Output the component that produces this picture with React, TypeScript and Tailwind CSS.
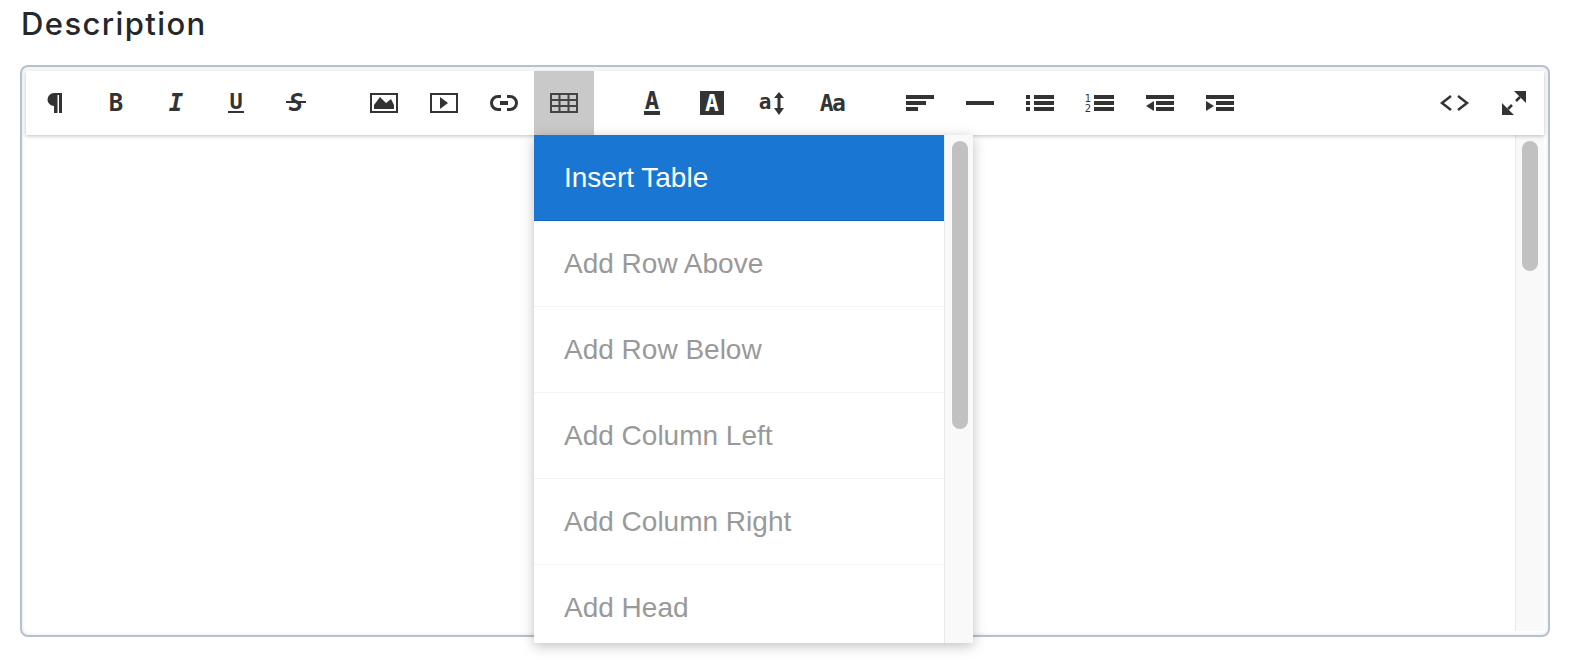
import type { ReactNode } from "react";

const MENU_ITEMS = ["Add Row Above", "Add Row Below", "Add Column Left", "Add Column Right", "Add Head"];

function Icon({ children }: { children: ReactNode }) {
  return (
    <svg width="60" height="64" viewBox="0 0 60 64" fill="#333" className="block">
      {children}
    </svg>
  );
}

// glyph style icons, kept as real text
function Glyph({ x, y, size, children, fill = "#333", italic = false }: { x: number; y: number; size: number; children: string; fill?: string; italic?: boolean }) {
  return (
    <text
      x={x}
      y={y}
      fontSize={size}
      fontWeight={700}
      fill={fill}
      textAnchor="middle"
      fontStyle={italic ? "italic" : "normal"}
      fontFamily='"DejaVu Sans Mono", monospace'
    >
      {children}
    </text>
  );
}

const GROUP_ONE: ReactNode[] = [
  <Icon key="p"><path d="M36 22h-8a6.500 6.500 0 0 0 0 13v7h3.500v-18h1.500v18h3z" /></Icon>,
  <Icon key="b"><Glyph x={30} y={40} size={24}>B</Glyph></Icon>,
  <Icon key="i"><Glyph x={30} y={40} size={24} italic>I</Glyph></Icon>,
  <Icon key="u"><Glyph x={30} y={38} size={22}>U</Glyph><rect x={22} y={40} width={16} height={2} /></Icon>,
  <Icon key="s"><Glyph x={30} y={40} size={24} italic>S</Glyph><rect x={20} y={30} width={20} height={2} /></Icon>,
];

const GROUP_TWO: ReactNode[] = [
  <Icon key="image">
    <rect x={17} y={23} width={26} height={18} fill="none" stroke="#333" strokeWidth={2} />
    <path d="M20 38v-4l6-8 6 6 5-4 3 6v4z" />
  </Icon>,
  <Icon key="video">
    <rect x={17} y={23} width={26} height={18} fill="none" stroke="#333" strokeWidth={2} />
    <path d="M26 26l8 6-8 6z" />
  </Icon>,
  <Icon key="link">
    <path d="M27 25.500h-3a6.500 6.500 0 0 0 0 13h3M33 25.500h3a6.500 6.500 0 0 1 0 13h-3" fill="none" stroke="#333" strokeWidth={3} />
    <rect x={26} y={30} width={8} height={4} />
  </Icon>,
];

const GROUP_THREE: ReactNode[] = [
  <Icon key="color"><Glyph x={30} y={38} size={24}>A</Glyph><rect x={22} y={40} width={16} height={4} /></Icon>,
  <Icon key="bg"><rect x={18} y={20} width={24} height={24} /><Glyph x={30} y={40} size={23} fill="#fff">A</Glyph></Icon>,
  <Icon key="size">
    <Glyph x={23} y={38} size={21}>a</Glyph>
    <path d="M37 21l5 6h-3.500v10h3.500l-5 7-5-7h3.500v-10h-3.500z" />
  </Icon>,
  <Icon key="case"><text x={30} y={40} fontSize={23} fontWeight={700} fill="#333" textAnchor="middle" letterSpacing={-1.500} fontFamily='"DejaVu Sans Mono", monospace'>Aa</text></Icon>,
];

const GROUP_FOUR: ReactNode[] = [
  <Icon key="align">
    <rect x={16} y={24} width={28} height={4} />
    <rect x={16} y={30} width={20} height={4} />
    <rect x={16} y={36} width={12} height={4} />
  </Icon>,
  <Icon key="hr"><rect x={16} y={30} width={28} height={4} /></Icon>,
  <Icon key="ul">
    <rect x={16} y={24} width={4} height={4} />
    <rect x={16} y={30} width={4} height={4} />
    <rect x={16} y={36} width={4} height={4} />
    <rect x={24} y={24} width={20} height={4} />
    <rect x={24} y={30} width={20} height={4} />
    <rect x={24} y={36} width={20} height={4} />
  </Icon>,
  <Icon key="ol">
    <text x={18} y={31} fontSize={10} textAnchor="middle" fontFamily='"DejaVu Sans", sans-serif'>1</text>
    <text x={18} y={41} fontSize={10} textAnchor="middle" fontFamily='"DejaVu Sans", sans-serif'>2</text>
    <rect x={24} y={24} width={20} height={4} />
    <rect x={24} y={30} width={20} height={4} />
    <rect x={24} y={36} width={20} height={4} />
  </Icon>,
  <Icon key="outdent">
    <rect x={16} y={24} width={28} height={4} />
    <rect x={26} y={30} width={18} height={4} />
    <rect x={26} y={36} width={18} height={4} />
    <path d="M16 35l8-5v10z" />
  </Icon>,
  <Icon key="indent">
    <rect x={16} y={24} width={28} height={4} />
    <rect x={26} y={30} width={18} height={4} />
    <rect x={26} y={36} width={18} height={4} />
    <path d="M24 35l-8-5v10z" />
  </Icon>,
];

export default function App() {
  return (
    <div className="w-[1570px] h-[660px] bg-white pl-5 pr-5 overflow-hidden" style={{ fontFamily: '"Liberation Sans", Arial, sans-serif' }}>
      <h2 className="h-[65px] pt-[4px] pl-px text-[31px] leading-[40px] tracking-[1.400px] font-medium text-[#24272b] font-['Inter',sans-serif]">
        Description
      </h2>

      <div className="h-[572px] border-2 border-[#b6c1cf] rounded-lg p-1 flex flex-col bg-white shadow-[inset_0_0_4px_#e0e5ec]">
        {/* toolbar */}
        <div className="h-16 shrink-0 flex bg-white shadow-[0_1px_4px_rgba(0,0,0,0.25)] relative z-10">
          <div className="flex">{GROUP_ONE}</div>
          <div className="flex ml-7">
            {GROUP_TWO}
            <div className="relative bg-[#c9c9c9]">
              <Icon>
                <rect x={17} y={23} width={26} height={18} fill="none" stroke="#444" strokeWidth={2} />
                <path d="M17 29h26M17 35h26M25.500 23v18M34.500 23v18" fill="none" stroke="#444" strokeWidth={2} />
              </Icon>
              {/* table dropdown */}
              <div className="absolute top-full left-0 w-[439px] h-[508px] flex bg-white shadow-[0_3px_12px_rgba(0,0,0,0.25)] overflow-hidden">
                <ul className="flex-1">
                  <li className="h-[86px] pl-[30px] flex items-center text-[28px] text-white bg-[#1976d2] border-b border-[#1565c0]">
                    Insert Table
                  </li>
                  {MENU_ITEMS.map((item) => (
                    <li key={item} className="h-[86px] pl-[30px] flex items-center text-[28px] text-[#999] border-b border-[#f4f4f4]">
                      {item}
                    </li>
                  ))}
                </ul>
                <div className="w-[29px] shrink-0 bg-[#f9f9f9] border-l border-[#e8e8e8] pt-1.5 pl-[7px]">
                  <div className="w-4 h-[288px] rounded-lg bg-[#c1c1c1]" />
                </div>
              </div>
            </div>
          </div>
          <div className="flex ml-7">{GROUP_THREE}</div>
          <div className="flex ml-7">{GROUP_FOUR}</div>
          <div className="flex ml-auto mr-px">
            <Icon>
              <path d="M28 25l-9 7 9 7M35 25l9 7-9 7" fill="none" stroke="#333" strokeWidth={2.500} />
            </Icon>
            <Icon>
              <path d="M31 20h12v12zM19 32l12 12h-12z" />
              <path d="M37 26l-4 4M25 38l4-4" fill="none" stroke="#333" strokeWidth={2.500} />
            </Icon>
          </div>
        </div>

        {/* editor body */}
        <div className="flex-1 flex justify-end">
          <div className="w-[29px] bg-[#f9f9f9] border-l border-[#e8e8e8] pt-1.5 pl-1.5">
            <div className="w-4 h-[130px] rounded-lg bg-[#c1c1c1]" />
          </div>
        </div>
      </div>
    </div>
  );
}
